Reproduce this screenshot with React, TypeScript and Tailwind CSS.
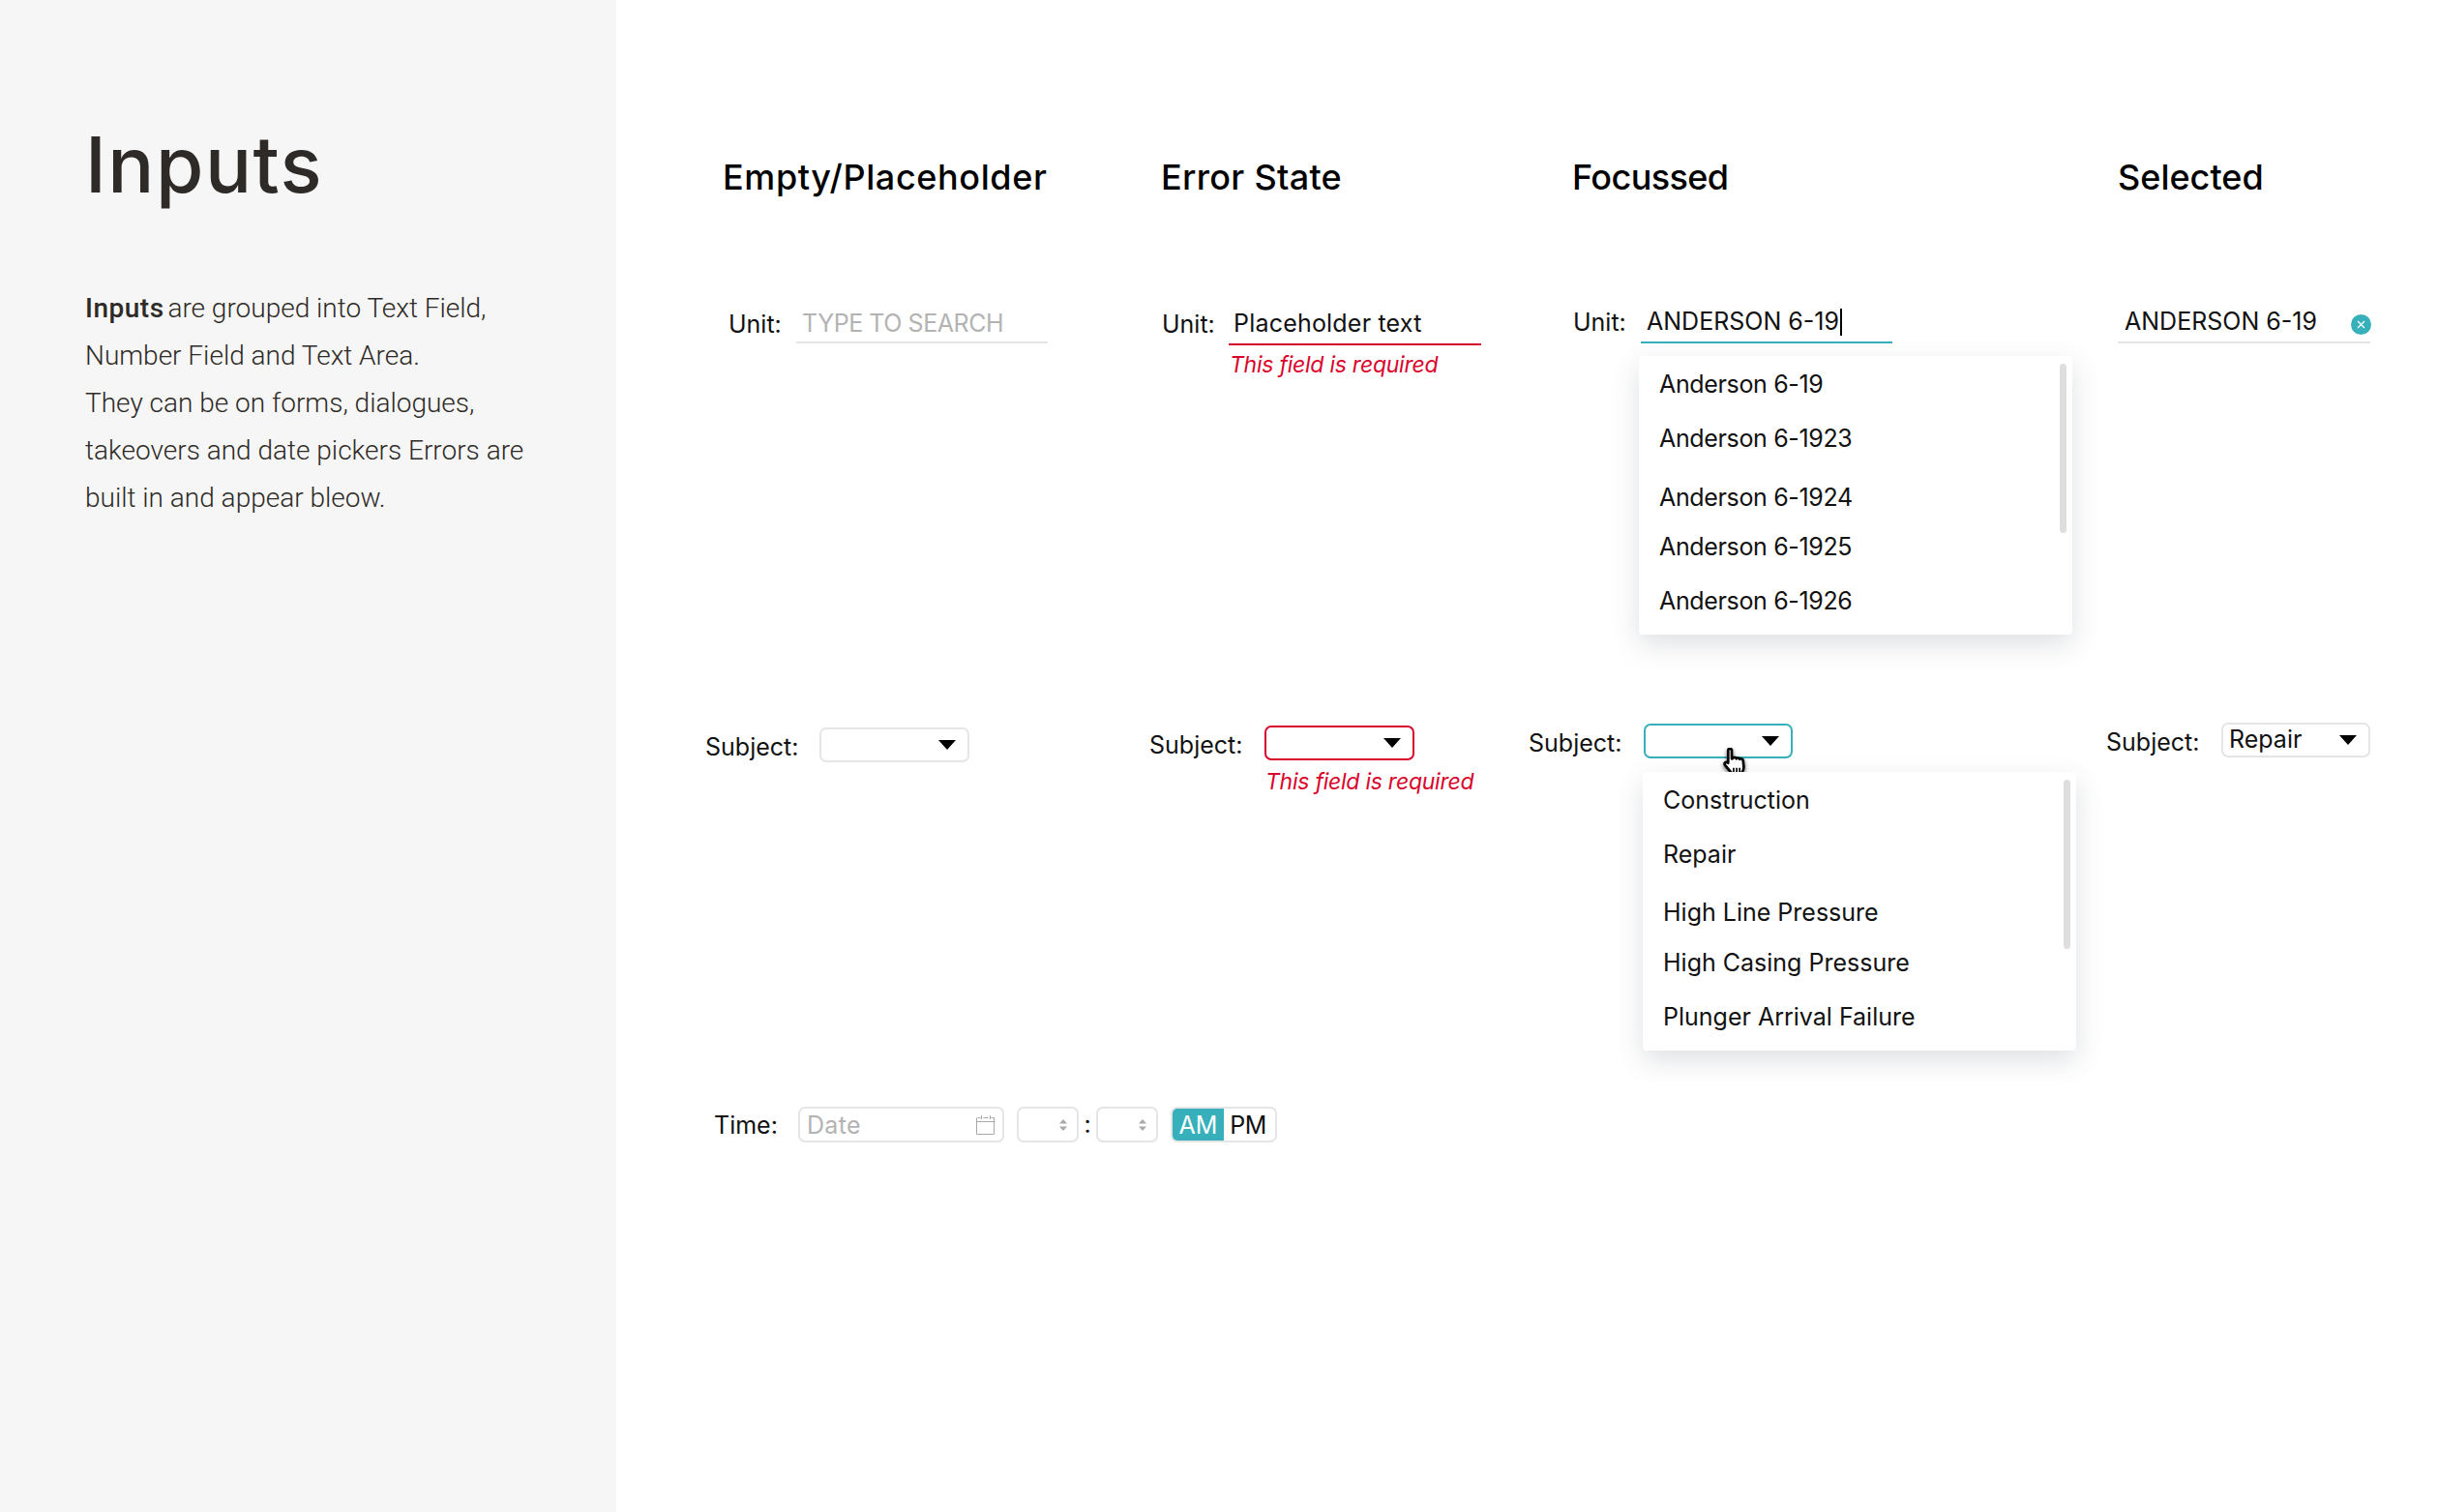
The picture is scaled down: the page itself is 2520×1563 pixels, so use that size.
import { Fragment } from "react"

const units = [
  { label: "Anderson 6-19", className: "mt-[13px]" },
  { label: "Anderson 6-1923", className: "mt-[24px]" },
  { label: "Anderson 6-1924", className: "mt-[29px]" },
  { label: "Anderson 6-1925", className: "mt-[19px]" },
  { label: "Anderson 6-1926", className: "mt-[24px]" },
]

const subjects = [
  { label: "Construction", className: "mt-[13px]" },
  { label: "Repair", className: "mt-[24px]" },
  { label: "High Line Pressure", className: "mt-[28px]" },
  { label: "High Casing Pressure", className: "mt-[20px]" },
  { label: "Plunger Arrival Failure", className: "mt-[24px]" },
]

const Caret = () => (
  <svg width="18" height="10" viewBox="0 0 18 10" className="shrink-0">
    <polygon points="0,0 18,0 9,10" fill="#000" />
  </svg>
)

const Spinner = () => (
  <svg width="8" height="12" viewBox="0 0 8 12">
    <polygon points="4,0 8,4.5 0,4.5" fill="#a8a8a8" />
    <polygon points="0,7.5 8,7.5 4,12" fill="#a8a8a8" />
  </svg>
)

const Calendar = () => (
  <svg width="20" height="20" viewBox="0 0 20 20" fill="none" stroke="#a9a9a9" strokeWidth="1">
    <path d="M1.5 2.5h3M7.5 2.5h5M15.5 2.5h3M18.5 2.5v17h-18v-17" />
    <path d="M0.5 6.5h19" />
    <path d="M5.5 0v4M14.5 0v4" />
  </svg>
)

const HandCursor = () => (
  <svg
    width="27"
    height="31"
    viewBox="0 0 26 30"
    className="absolute left-[79px] top-[23px] drop-shadow-[0_2px_2px_rgba(0,0,0,0.6)]"
  >
    <path
      d="M6 2.5c0-2 3.6-2 3.6 0v8.5l1-.3c.5-1.5 3.2-1.4 3.6.2.7-1.1 3-1 3.4.5 1-.8 3.2-.3 3.4 1.4l.6 6.2c.2 2.4-.6 4-1.9 5.8v3.2H9.500v-2.800L3 17.500c-1.500-2 .8-4.200 3-2.300z"
      fill="#fff"
      stroke="#000"
      strokeWidth="2.6"
      strokeLinejoin="round"
    />
    <path d="M11.500 20v4.500M14.500 20v4.500M17.500 20v4.500" stroke="#000" strokeWidth="1.600" />
  </svg>
)

const ClearIcon = () => (
  <span className="flex h-[21px] w-[21px] items-center justify-center rounded-full bg-[#38b0bb]">
    <svg width="9" height="9" viewBox="0 0 9 9" stroke="#fff" strokeWidth="1.3">
      <path d="M1 1l7 7M8 1l-7 7" />
    </svg>
  </span>
)

const ErrorText = ({ className }: { className: string }) => (
  <p className={`text-[23px] leading-[28px] tracking-[-0.25px] italic text-[#d9042b] ${className}`}>
    This field is required
  </p>
)

const Dropdown = ({
  items,
  className,
}: {
  items: { label: string; className: string }[]
  className: string
}) => (
  <div
    className={`relative flex h-[288px] w-[448px] flex-col rounded-[4px] bg-white pl-[21px] shadow-[0_10px_28px_rgba(60,70,90,0.17)] ${className}`}
  >
    <div className="absolute right-[6px] top-[8px] h-[175px] w-[7px] rounded-full bg-[#dedede]" />
    {items.map((item) => (
      <p key={item.label} className={`h-[32px] leading-[32px] ${item.className}`}>
        {item.label}
      </p>
    ))}
  </div>
)

const Select = ({
  value,
  className,
  children,
}: {
  value?: string
  className: string
  children?: React.ReactNode
}) => (
  <div
    className={`relative flex h-[36px] items-center justify-between rounded-[7px] border-2 pl-[6px] pr-[12px] ${className}`}
  >
    <span>{value}</span>
    <Caret />
    {children}
  </div>
)

const BoxLabel = ({ className, children }: { className: string; children: string }) => (
  <span className={`shrink-0 pt-[3px] leading-[30px] ${className}`}>{children}</span>
)

export default function App() {
  return (
    <div className="flex min-h-[1563px] w-full bg-white font-[Inter,sans-serif] text-[25px] text-[#111]">
      {/* 説明 */}
      <aside className="w-[637px] shrink-0 bg-[#f6f6f6] pl-[88px] pt-[122px] text-[#2e2a27]">
        <h1 className="text-[80px] font-medium leading-[96px] tracking-[1.5px]">Inputs</h1>
        <p className="mt-[76px] font-[Roboto,sans-serif] text-[28px] font-light leading-[49px]">
          <strong className="mr-[-3px] font-medium tracking-[0.5px]">Inputs</strong> are grouped into Text Field,
          <br />
          Number Field and Text Area.
          <br />
          They can be on forms, dialogues,
          <br />
          takeovers and date pickers Errors are
          <br />
          built in and appear bleow.
        </p>
      </aside>

      <main className="min-w-0 flex-1">
        {/* 見出し */}
        <div className="flex h-[310px] pl-[110px] pt-[161px] text-[36px] font-medium leading-[44px] text-black">
          <h2 className="w-[453px] tracking-[0.6px]">Empty/Placeholder</h2>
          <h2 className="w-[425px] tracking-[0.3px]">Error State</h2>
          <h2 className="w-[564px] tracking-[-0.6px]">Focussed</h2>
          <h2>Selected</h2>
        </div>

        {/* Unit */}
        <div className="flex h-[436px] pl-[116px]">
          <div className="mt-[3px] flex h-[42px] w-[448px]">
            <span className="flex w-[70px] items-center pt-[3px]">Unit:</span>
            <div className="flex w-[260px] items-center border-b-2 border-[#e5e5e5] pl-[6px] pt-[3px] tracking-[-0.45px] text-[#b3b3b3]">
              TYPE TO SEARCH
            </div>
          </div>

          <div className="mt-[5px] w-[425px]">
            <div className="flex h-[42px]">
              <span className="flex w-[69px] items-center">Unit:</span>
              <div className="flex w-[261px] items-center border-b-2 border-[#d9042b] pl-[5px] tracking-[0.2px]">
                Placeholder text
              </div>
            </div>
            <ErrorText className="ml-[70px] mt-[6px]" />
          </div>

          <div className="mt-[3px] w-[563px]">
            <div className="flex h-[42px]">
              <span className="flex w-[70px] items-center">Unit:</span>
              <div className="flex w-[260px] items-center border-b-2 border-[#38b0bb] pl-[6px]">
                ANDERSON 6-19
                <span className="ml-[1px] h-[28px] w-[2px] bg-black" />
              </div>
            </div>
            <Dropdown items={units} className="ml-[68px] mt-[13px] tracking-[-0.35px]" />
          </div>

          <div className="mt-[3px] flex h-[42px] w-[261px] items-center justify-between border-b-2 border-[#e5e5e5] pl-[7px]">
            ANDERSON 6-19
            <span className="mr-[-1px] mt-[5px]">
              <ClearIcon />
            </span>
          </div>
        </div>

        {/* Subject */}
        <div className="flex h-[398px] pl-[92px]">
          <div className="mt-[6px] flex w-[459px] items-center self-start">
            <BoxLabel className="w-[118px]">Subject:</BoxLabel>
            <Select className="w-[155px] border-[#e5e5e5]" />
          </div>

          <div className="mt-[4px] w-[392px]">
            <div className="flex items-center">
              <BoxLabel className="w-[119px]">Subject:</BoxLabel>
              <Select className="w-[155px] border-[#d9042b]" />
            </div>
            <ErrorText className="ml-[120px] mt-[8px]" />
          </div>

          <div className="mt-[2px] w-[597px]">
            <div className="flex items-center">
              <BoxLabel className="w-[119px]">Subject:</BoxLabel>
              <Select className="w-[154px] border-[#38b0bb]">
                <HandCursor />
              </Select>
            </div>
            <Dropdown items={subjects} className="ml-[118px] mt-[14px]" />
          </div>

          <div className="mt-[1px] flex items-center self-start">
            <BoxLabel className="w-[119px]">Subject:</BoxLabel>
            <Select value="Repair" className="w-[154px] border-[#e5e5e5]" />
          </div>
        </div>

        {/* Time */}
        <div className="flex h-[37px] items-center pl-[101px]">
          <span className="w-[87px] pt-[2px]">Time:</span>
          <div className="flex h-full w-[213px] items-center justify-between rounded-[7px] border-2 border-[#e5e5e5] pl-[7px] pr-[7px] text-[#b3b3b3]">
            <span className="pt-[2px] tracking-[0.3px]">Date</span>
            <Calendar />
          </div>
          {[0, 1].map((i) => (
            <Fragment key={i}>
              {i === 1 && <span className="flex w-[18px] justify-center">:</span>}
              <div
                className={`flex h-full w-[64px] items-center justify-end rounded-[7px] border-2 border-[#e5e5e5] pr-[10px] ${
                  i === 0 ? "ml-[13px] pr-[9px]" : ""
                }`}
              >
                <Spinner />
              </div>
            </Fragment>
          ))}
          <div className="ml-[13px] flex h-full w-[110px] overflow-hidden rounded-[7px] border-2 border-[#e5e5e5]">
            <span className="flex w-[53px] items-center justify-center bg-[#38b0bb] pt-[2px] text-white">AM</span>
            <span className="flex flex-1 items-center justify-center pr-[3px] pt-[2px] tracking-[-0.4px]">PM</span>
          </div>
        </div>
      </main>
    </div>
  )
}
